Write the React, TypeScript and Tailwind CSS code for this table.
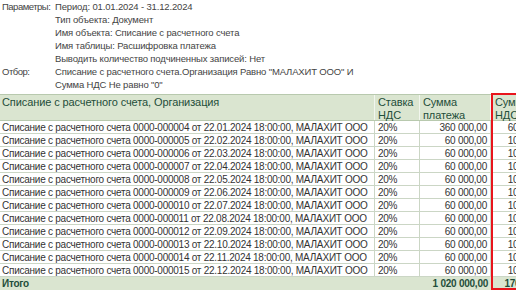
import React from "react";

const rows = [
  ["0000-000004", "22.01.2024", "360 000,00", "60 000,00"],
  ["0000-000005", "22.02.2024", "60 000,00", "10 000,00"],
  ["0000-000006", "22.03.2024", "60 000,00", "10 000,00"],
  ["0000-000007", "22.04.2024", "60 000,00", "10 000,00"],
  ["0000-000008", "22.05.2024", "60 000,00", "10 000,00"],
  ["0000-000009", "22.06.2024", "60 000,00", "10 000,00"],
  ["0000-000010", "22.07.2024", "60 000,00", "10 000,00"],
  ["0000-000011", "22.08.2024", "60 000,00", "10 000,00"],
  ["0000-000012", "22.09.2024", "60 000,00", "10 000,00"],
  ["0000-000013", "22.10.2024", "60 000,00", "10 000,00"],
  ["0000-000014", "22.11.2024", "60 000,00", "10 000,00"],
  ["0000-000015", "22.12.2024", "60 000,00", "10 000,00"],
];

export default function App() {
  return (
    <div
      className="w-[516px] h-[290px] overflow-hidden bg-white text-[10px] tracking-[-0.25px] leading-[13px] text-[#333333]"
      style={{ fontFamily: '"Liberation Sans", Arial, sans-serif' }}
    >
      <div className="flex pl-[2px] text-[9.5px] tracking-[-0.1px] text-[#444444]">
        <div className="w-[53px] shrink-0 tracking-[-0.5px]">
          <div>Параметры:</div>
          <div className="h-[52px]" />
          <div>Отбор:</div>
        </div>
        <div className="whitespace-nowrap tracking-[-0.15px]">
          <div>Период: 01.01.2024 - 31.12.2024</div>
          <div>Тип объекта: Документ</div>
          <div>Имя объекта: Списание с расчетного счета</div>
          <div>Имя таблицы: Расшифровка платежа</div>
          <div>Выводить количество подчиненных записей: Нет</div>
          <div>Списание с расчетного счета.Организация Равно "МАЛАХИТ ООО" И</div>
          <div>Сумма НДС Не равно "0"</div>
        </div>
      </div>
      <div className="relative mt-[3px] w-[560px]">
        <div className="flex h-[27px] bg-[#dae5d0] border-t border-[#b8c9ae] border-b border-b-[#b8c9ae] text-[#1f4e3a] text-[11px] tracking-[-0.1px] leading-[13px]">
          <div className="w-[375px] shrink-0 px-[2px] pt-[1px] border-r border-[#f2f6ee]">
            Списание с расчетного счета, Организация
          </div>
          <div className="w-[45px] shrink-0 px-[3px] pt-[1px] border-r border-[#f2f6ee]">
            Ставка
            <br />
            НДС
          </div>
          <div className="w-[71px] shrink-0 px-[3px] pt-[1px] border-r border-[#f2f6ee]">
            Сумма
            <br />
            платежа
          </div>
          <div className="w-[63px] shrink-0 px-[4px] pt-[1px] whitespace-nowrap">
            Сумма
            <br />
            НДС
          </div>
        </div>
        {rows.map((r) => (
          <div key={r[0]} className="flex h-[13px] border-b border-[#cbd6c5] whitespace-nowrap">
            <div className="w-[375px] shrink-0 pl-[2px] border-r border-[#cbd6c5] overflow-hidden">
              Списание с расчетного счета {r[0]} от {r[1]} 18:00:00, МАЛАХИТ ООО
            </div>
            <div className="w-[45px] shrink-0 pl-[3px] border-r border-[#cbd6c5]">20%</div>
            <div className="w-[71px] shrink-0 pr-[3px] text-right border-r border-[#cbd6c5]">{r[2]}</div>
            <div className="w-[63px] shrink-0 pr-[3px] text-right border-r border-[#cbd6c5]">{r[3]}</div>
          </div>
        ))}
        <div className="flex h-[13px] bg-[#dae5d0] font-bold text-[#1f4e3a] whitespace-nowrap">
          <div className="w-[375px] shrink-0 pl-[2px]">Итого</div>
          <div className="w-[45px] shrink-0" />
          <div className="w-[71px] shrink-0 pr-[3px] text-right">1 020 000,00</div>
          <div className="w-[64px] shrink-0 pr-[3px] text-right">170 000,00</div>
        </div>
        <div className="absolute left-[491px] top-[-1px] w-[63px] h-[197px] border-2 border-[#e8141c] pointer-events-none" />
      </div>
    </div>
  );
}
